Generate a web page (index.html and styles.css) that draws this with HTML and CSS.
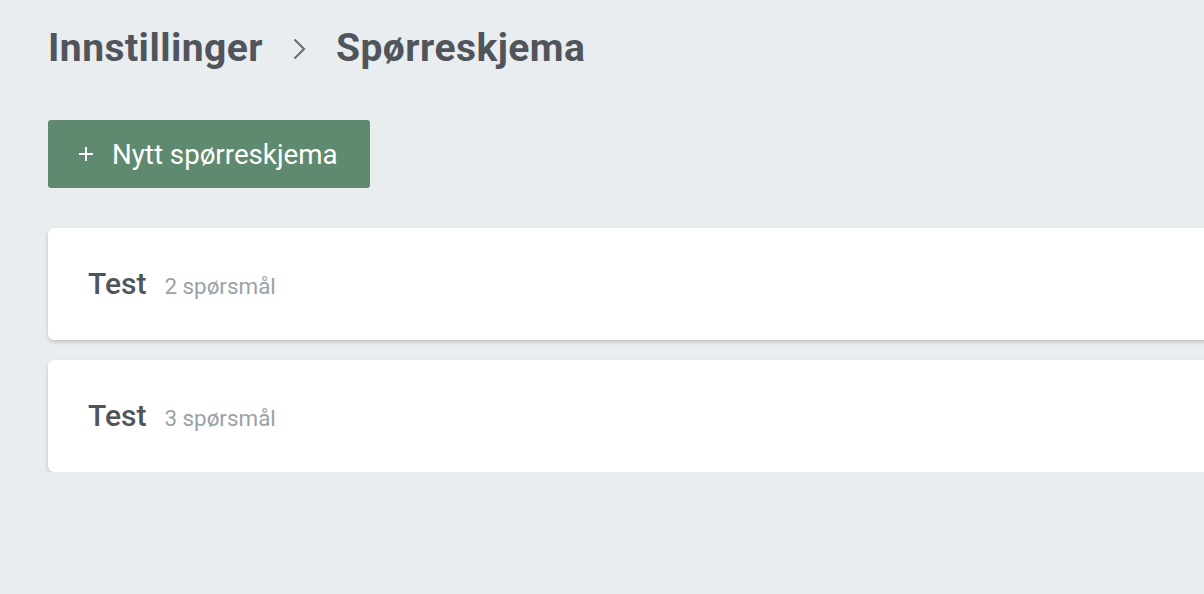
FILE: index.html
```html
<!DOCTYPE html>
<html lang="no">
<head>
<meta charset="utf-8">
<title>Spørreskjema</title>
<link rel="stylesheet" href="styles.css">
</head>
<body>
<main class="page">
  <h1 class="breadcrumb">
    <span class="crumb">Innstillinger</span>
    <svg class="chevron" width="13" height="22" viewBox="0 0 13 22"><path d="M1.5 1.5 L11 11 L1.5 20.5" fill="none" stroke="#6b7076" stroke-width="2.2"/></svg>
    <span class="crumb">Spørreskjema</span>
  </h1>
  <button class="btn-new" type="button">
    <svg class="plus" width="16" height="16" viewBox="0 0 16 16"><path d="M8 1 V15 M1 8 H15" stroke="#fff" stroke-width="2"/></svg>
    <span>Nytt spørreskjema</span>
  </button>
  <ul class="list">
    <li class="card"><span class="card-title">Test</span><span class="card-meta">2 spørsmål</span></li>
    <li class="card"><span class="card-title">Test</span><span class="card-meta">3 spørsmål</span></li>
  </ul>
</main>
</body>
</html>
```
FILE: styles.css
```css
html, body {
  margin: 0;
  padding: 0;
  background: #e9edf0;
  overflow: hidden;
}
body {
  font-family: Roboto, "Liberation Sans", sans-serif;
  color: #50555b;
}
.page {
  padding: 23px 0 0 48px;
  width: 1300px;
}
.breadcrumb {
  display: flex;
  align-items: center;
  gap: 27px;
  margin: 0;
  font-size: 39px;
  font-weight: 700;
  line-height: 50px;
  letter-spacing: 0.45px;
}
.chevron {
  margin-top: 2px;
  margin-left: 3px;
  margin-right: 3px;
}
.btn-new {
  display: flex;
  align-items: center;
  gap: 18px;
  margin-top: 47px;
  width: 322px;
  height: 68px;
  padding: 0 0 0 30px;
  border: 0;
  border-radius: 3px;
  background: #5f8a70;
  color: #fff;
  font-family: inherit;
  font-size: 27.7px;
  font-weight: 400;
}
.plus {
  flex: none;
}
.list {
  list-style: none;
  margin: 40px 0 0;
  padding: 0;
  display: flex;
  flex-direction: column;
  gap: 20px;
}
.card {
  display: flex;
  align-items: baseline;
  gap: 18px;
  height: 112px;
  box-sizing: border-box;
  padding: 38px 40px 0;
  background: #fff;
  border-radius: 6px;
  box-shadow: 0 2px 4px rgba(0, 0, 0, 0.18);
}
.card-title {
  font-size: 30px;
  font-weight: 500;
  color: #50555b;
}
.card-meta {
  font-size: 22.4px;
  color: #9aa2a9;
}
```
